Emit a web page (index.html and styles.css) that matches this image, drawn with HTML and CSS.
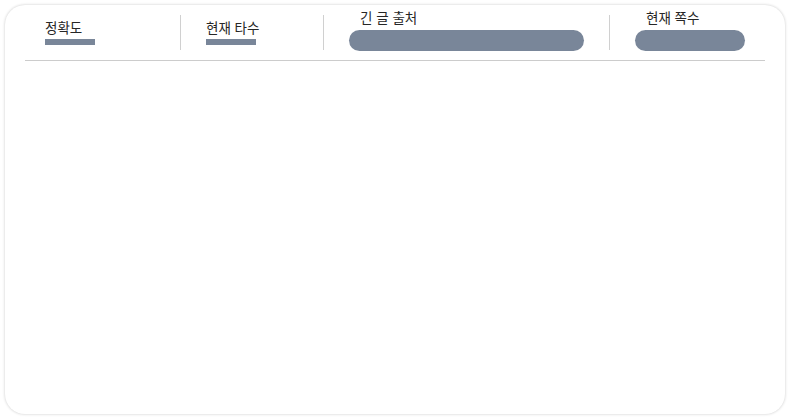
FILE: index.html
```html
<!DOCTYPE html>
<html lang="ko">
<head>
<meta charset="utf-8">
<link rel="stylesheet" href="styles.css">
</head>
<body>
<div class="card">
  <div class="stats">
    <div class="stat stat-first">
      <div class="label">정확도</div>
      <div class="bar"></div>
    </div>
    <div class="stat stat-speed">
      <div class="label">현재 타수</div>
      <div class="bar"></div>
    </div>
    <div class="stat stat-source">
      <div class="label label-pill">긴 글 출처</div>
      <div class="pill pill-wide"></div>
    </div>
    <div class="stat stat-page">
      <div class="label label-pill">현재 쪽수</div>
      <div class="pill pill-short"></div>
    </div>
  </div>
  <div class="body"></div>
</div>
</body>
</html>
```
FILE: styles.css
```css
html, body {
  margin: 0;
  padding: 0;
  background: #ffffff;
}
body {
  padding: 5px;
  font-family: "Noto Sans CJK KR", "Noto Sans", sans-serif;
  color: #262626;
}
.card {
  width: 780px;
  height: 409px;
  box-sizing: border-box;
  border-radius: 20px;
  background: #ffffff;
  box-shadow: 0 0 3px rgba(0, 0, 0, 0.22);
  padding: 0 20px;
}
.stats {
  display: flex;
  padding: 10px 0;
  border-bottom: 1px solid #cccccc;
}
.stat {
  height: 35px;
  box-sizing: border-box;
  display: flex;
  flex-direction: column;
  justify-content: flex-start;
  padding-left: 25px;
  border-left: 1px solid #d0d0d0;
}
.stat-first {
  width: 155px;
  padding-left: 20px;
  border-left: none;
}
.stat-speed { width: 143px; }
.stat-source { width: 286px; }
.stat-page { width: 156px; }
.label {
  font-size: 13.5px;
  line-height: 17px;
  margin-top: 4px;
}
.label-pill {
  padding-left: 11px;
  margin-top: -6px;
}
.bar {
  width: 50px;
  height: 6px;
  margin-top: 3px;
  background: #798699;
}
.pill {
  flex: none;
  height: 21px;
  border-radius: 11px;
  background: #798699;
  margin-top: 4px;
}
.pill-wide { width: 235px; }
.pill-short { width: 110px; }
```
